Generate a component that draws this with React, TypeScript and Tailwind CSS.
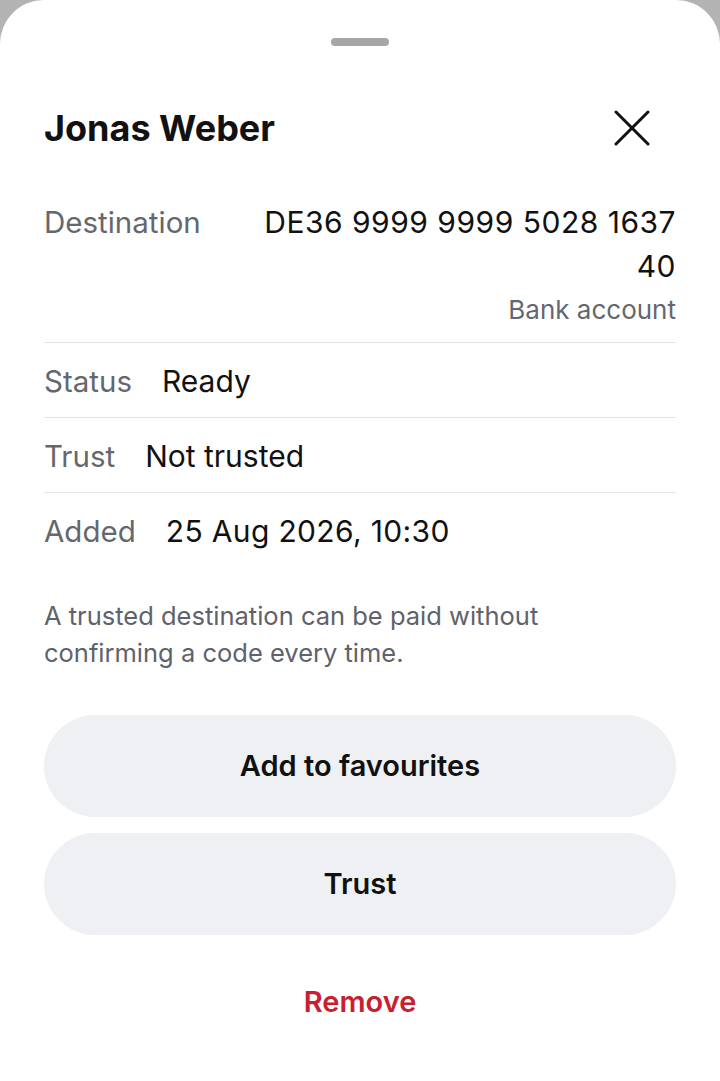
export default function App() {
  const rows = [
    { label: "Status", value: "Ready", track: "" },
    { label: "Trust", value: "Not trusted", track: "" },
    { label: "Added", value: "25 Aug 2026, 10:30", track: "tracking-[0.35px]" },
  ];

  return (
    <div className="min-h-screen bg-[#b3b3b3]" style={{ fontFamily: "Inter, 'Noto Sans', sans-serif" }}>
      <div className="h-[1081px] rounded-t-[44px] bg-white px-[44px] pt-[38px]">
        {/* handle */}
        <div className="mx-auto h-[8px] w-[58px] rounded-full bg-[#a6a6a6]" />

        {/* header */}
        <div className="mt-[60px] mb-[35px] flex items-center justify-between">
          <h1 className="text-[36px] font-bold leading-[44px] text-[#111111]">Jonas Weber</h1>
          <button aria-label="Close" className="mr-[26px] flex h-[36px] w-[36px] items-center justify-center">
            <svg width="36" height="36" viewBox="0 0 36 36" fill="none" stroke="#111111" strokeWidth="3" strokeLinecap="round">
              <path d="M2 2L34 34M34 2L2 34" />
            </svg>
          </button>
        </div>

        {/* destination */}
        <div className="flex gap-[32px] border-b border-[#e4e4e6] pt-[15px] pb-[15px]">
          <span className="text-[29.5px] leading-[44px] text-[#64676e]">Destination</span>
          <div className="flex-1 text-right">
            <p className="text-[30px] leading-[44px] tracking-[0.5px] text-[#111111]">DE36 9999 9999 5028 1637 40</p>
            <p className="mt-[5px] text-[26px] leading-[34px] text-[#64676e]">Bank account</p>
          </div>
        </div>

        {rows.map((r, i) => (
          <div
            key={r.label}
            className={
              i < rows.length - 1
                ? "flex gap-[30px] border-b border-[#e4e4e6] pt-[16px] pb-[14px]"
                : "flex gap-[30px] pt-[16px] pb-[14px]"
            }
          >
            <span className="text-[29.5px] leading-[44px] text-[#64676e]">{r.label}</span>
            <span className={`text-[30px] leading-[44px] text-[#111111] ${r.track}`}>{r.value}</span>
          </div>
        ))}

        <p className="mt-[30px] text-[25.5px] leading-[37px] text-[#5f626a]">
          A trusted destination can be paid without
          <br />
          confirming a code every time.
        </p>

        {/* actions */}
        <div className="mt-[44px] flex flex-col gap-[16px]">
          <button className="h-[102px] w-full rounded-full bg-[#eef0f3] text-[29px] font-semibold text-[#111111]">
            Add to favourites
          </button>
          <button className="h-[102px] w-full rounded-full bg-[#eef0f3] text-[29px] font-semibold text-[#111111]">
            Trust
          </button>
        </div>

        <div className="mt-[47px] text-center text-[29px] font-semibold leading-[40px] text-[#c8202f]">
          Remove
        </div>
      </div>
    </div>
  );
}
